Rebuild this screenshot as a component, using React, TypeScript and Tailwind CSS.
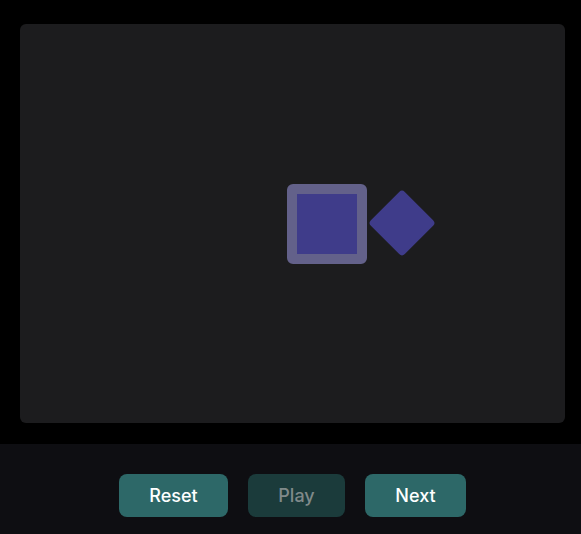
export default function App() {
  const buttons = [
    { label: 'Reset', disabled: false, width: 'w-[109px]' },
    { label: 'Play', disabled: true, width: 'w-[97px]' },
    { label: 'Next', disabled: false, width: 'w-[101px]' },
  ];

  return (
    <div className="w-[581px] h-[534px] flex flex-col bg-black font-['Inter','Liberation_Sans',sans-serif]">
      <div className="h-[444px] pl-5 pt-6">
        <div className="relative w-[545px] h-[399px] rounded-md bg-[#1c1c1e]">
          {/* current item */}
          <div className="absolute left-[267px] top-[160px] w-20 h-20 rounded-md bg-[#3f3c8a] border-[10px] border-[#63618a]" />
          {/* next item */}
          <div className="absolute left-[358px] top-[175px] w-12 h-12 rotate-45 rounded bg-[#3f3c8a]" />
        </div>
      </div>
      <div className="flex-1 bg-[#0e0e12] flex justify-center items-start pt-[30px] pl-1 gap-5">
        {buttons.map((b) => (
          <button
            key={b.label}
            disabled={b.disabled}
            className={`${b.width} h-[43px] rounded-lg text-lg font-medium leading-7 text-center ${
              b.disabled ? 'bg-[#1b3b3b] text-[#808a8a]' : 'bg-[#2d6868] text-white'
            }`}
          >
            {b.label}
          </button>
        ))}
      </div>
    </div>
  );
}
